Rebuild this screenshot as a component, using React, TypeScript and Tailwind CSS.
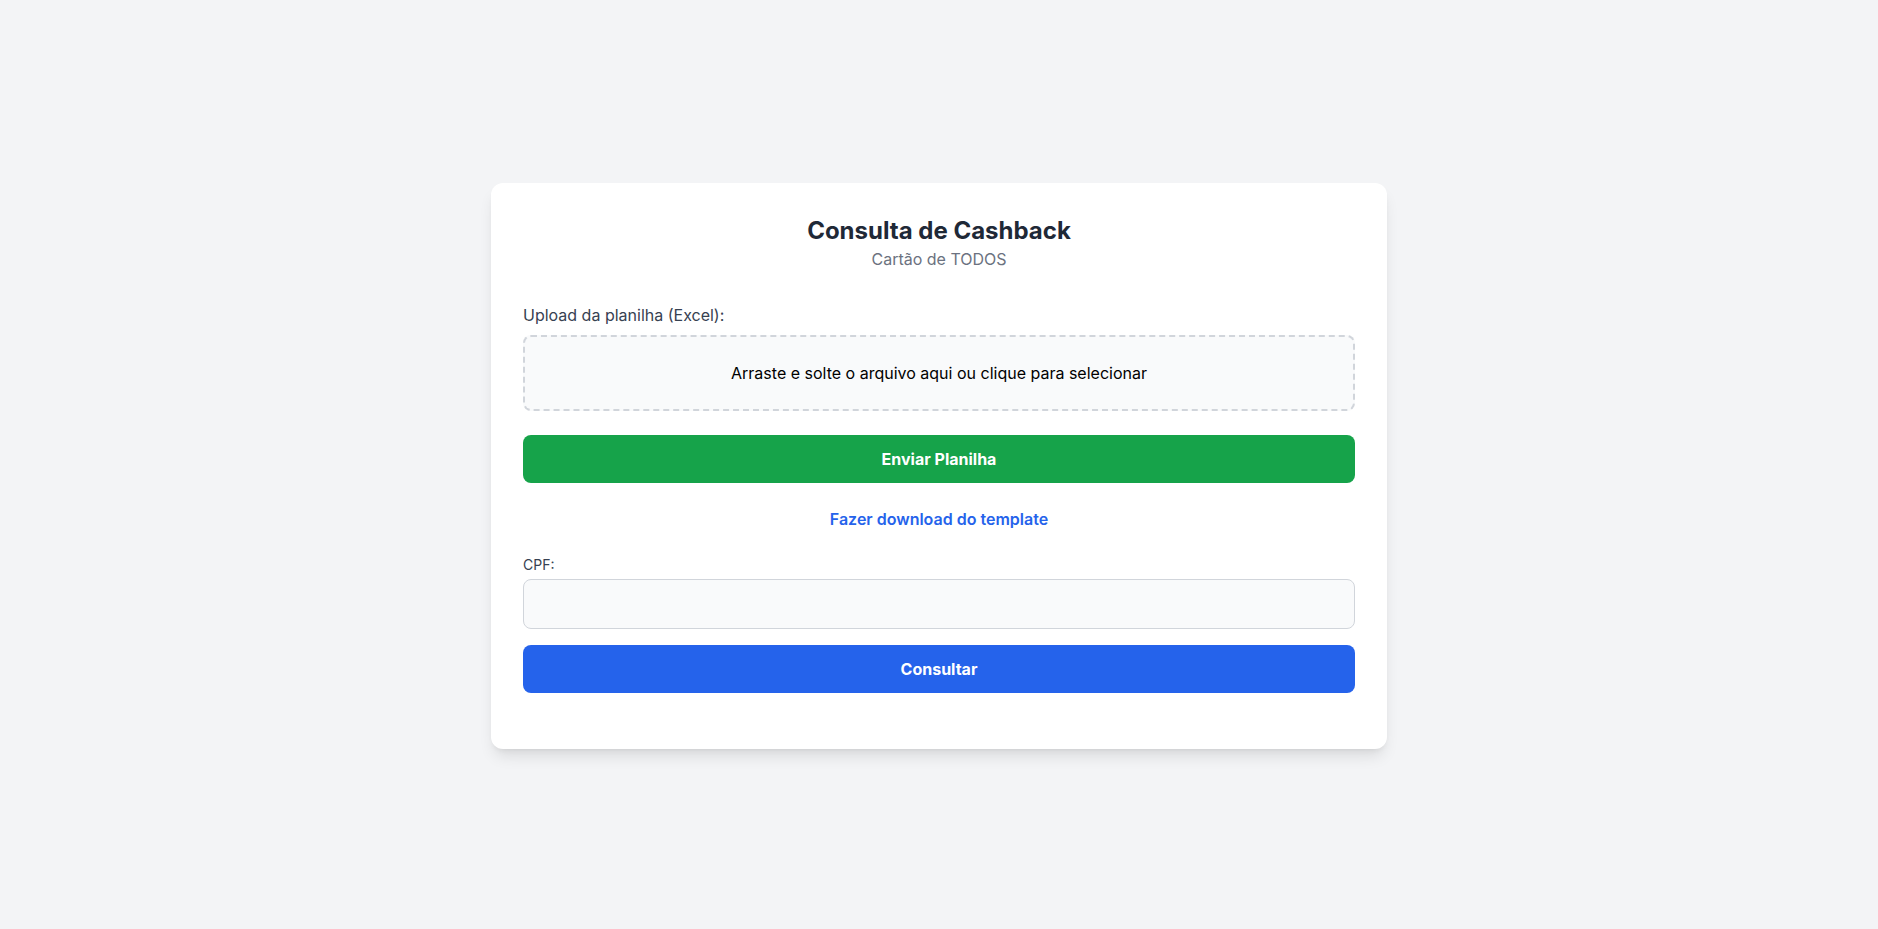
import React from "react";

export default function App() {
  return (
    <div
      className="min-h-screen bg-[#f3f4f6] flex items-center justify-center pt-[3px]"
      style={{ fontFamily: "Inter, 'Noto Sans', sans-serif" }}
    >
      <div className="w-full max-w-4xl bg-white rounded-xl shadow-lg p-8 pb-14">
        <div className="text-center mb-8">
          <h1 className="text-2xl font-bold text-[#1f2937]">Consulta de Cashback</h1>
          <p className="text-base text-[#6b7280]">Cartão de TODOS</p>
        </div>

        <label className="block text-base text-[#374151] mb-2">Upload da planilha (Excel):</label>
        <div className="border-2 border-dashed border-[#d1d5db] bg-[#f9fafb] rounded-lg p-6 text-center text-black text-base mb-6">
          Arraste e solte o arquivo aqui ou clique para selecionar
        </div>

        <button className="w-full bg-[#16a34a] text-white font-bold text-base py-3 rounded-lg">
          Enviar Planilha
        </button>

        <div className="text-center mt-6">
          <a className="text-[#2563eb] font-semibold text-base cursor-pointer">Fazer download do template</a>
        </div>

        <div className="mt-6">
          <label className="block text-sm text-[#374151] mb-1">CPF:</label>
          <input
            type="text"
            className="w-full border border-[#d1d5db] bg-[#f9fafb] rounded-lg px-3 py-3 text-base outline-none"
          />
          <button className="w-full mt-4 bg-[#2563eb] text-white font-bold text-base py-3 rounded-lg">
            Consultar
          </button>
        </div>
      </div>
    </div>
  );
}
